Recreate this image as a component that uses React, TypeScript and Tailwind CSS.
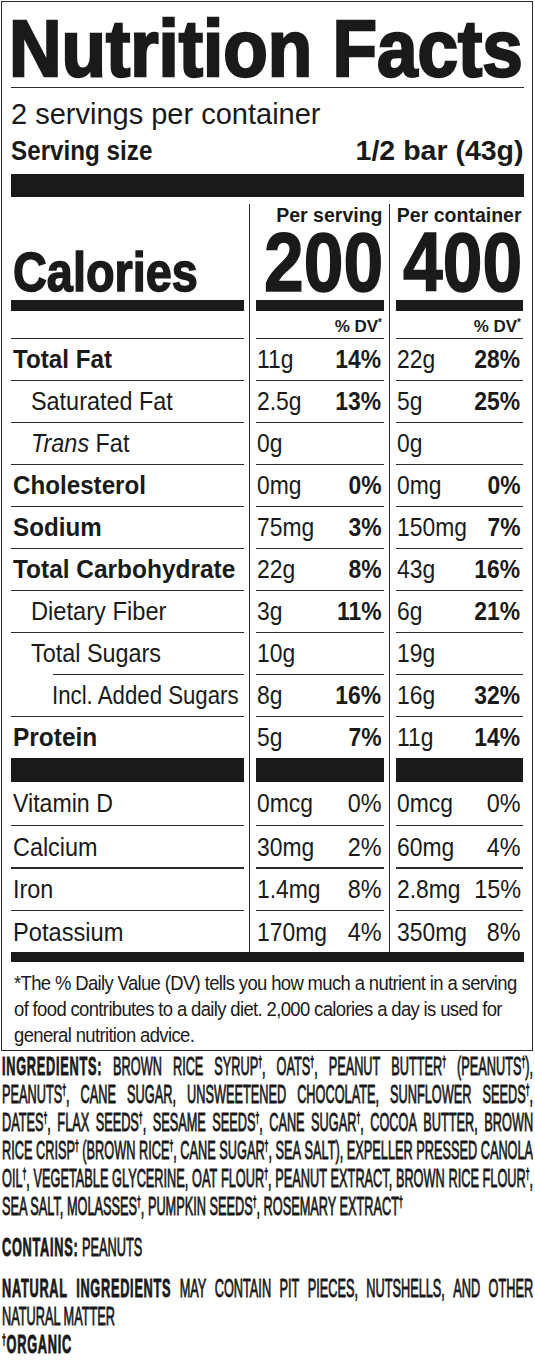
import type { ReactNode } from "react";

type Nutrient = {
  label: ReactNode;
  bold?: boolean;
  pad: string;
  sc: string;
  line?: string;
  s: string[];
  c: string[];
};

const nutrients: Nutrient[] = [
  { label: "Total Fat", bold: true, pad: "pl-[1.5px]", sc: "scale-x-[0.93]", s: ["11g", "14%"], c: ["22g", "28%"] },
  { label: "Saturated Fat", pad: "pl-[19.5px]", sc: "scale-x-[0.9]", s: ["2.5g", "13%"], c: ["5g", "25%"] },
  {
    label: (
      <>
        <i>Trans</i> Fat
      </>
    ),
    pad: "pl-[19.5px]",
    sc: "scale-x-[0.9]",
    s: ["0g"],
    c: ["0g"],
  },
  { label: "Cholesterol", bold: true, pad: "pl-[1.5px]", sc: "scale-x-[0.93]", s: ["0mg", "0%"], c: ["0mg", "0%"] },
  { label: "Sodium", bold: true, pad: "pl-[1.5px]", sc: "scale-x-[0.93]", s: ["75mg", "3%"], c: ["150mg", "7%"] },
  { label: "Total Carbohydrate", bold: true, pad: "pl-[1.5px]", sc: "scale-x-[0.94]", s: ["22g", "8%"], c: ["43g", "16%"] },
  { label: "Dietary Fiber", pad: "pl-[19.5px]", sc: "scale-x-[0.91]", s: ["3g", "11%"], c: ["6g", "21%"] },
  { label: "Total Sugars", pad: "pl-[19.5px]", sc: "scale-x-[0.9]", s: ["10g"], c: ["19g"] },
  {
    label: "Incl. Added Sugars",
    pad: "pl-[40.5px]",
    sc: "scale-x-[0.855]",
    line: "ml-[41.5px]",
    s: ["8g", "16%"],
    c: ["16g", "32%"],
  },
  { label: "Protein", bold: true, pad: "pl-[1.5px]", sc: "scale-x-[0.94]", s: ["5g", "7%"], c: ["11g", "14%"] },
];

const vitamins = [
  { label: "Vitamin D", sc: "scale-x-[0.89]", s: ["0mcg", "0%"], c: ["0mcg", "0%"] },
  { label: "Calcium", sc: "scale-x-[0.9]", s: ["30mg", "2%"], c: ["60mg", "4%"] },
  { label: "Iron", sc: "scale-x-[0.9]", s: ["1.4mg", "8%"], c: ["2.8mg", "15%"] },
  { label: "Potassium", sc: "scale-x-[0.91]", s: ["170mg", "4%"], c: ["350mg", "8%"] },
];

function Dag() {
  return <span className="relative -top-[8px] text-[14px] leading-none">†</span>;
}

function withDag(s: string): ReactNode {
  const parts = s.split("†");
  return parts.map((p, i) => (
    <span key={i}>
      {p}
      {i < parts.length - 1 && <Dag />}
    </span>
  ));
}

function JLine({ words, bold = 0 }: { words: string[]; bold?: number }) {
  return (
    <div className="flex h-[28px] justify-between whitespace-nowrap">
      {words.map((w, i) => (
        <span key={i} className={i < bold ? "font-bold tracking-[1.5px]" : ""}>
          {withDag(w)}
        </span>
      ))}
    </div>
  );
}

function Values({ v, boldPct }: { v: string[]; boldPct: boolean }) {
  return (
    <div className="flex flex-1 items-center justify-between pl-[1px] pr-[2px] text-[26px] leading-[26px]">
      <span className="inline-block origin-left scale-x-[0.88] whitespace-nowrap">{v[0]}</span>
      {v[1] && (
        <span
          className={`inline-block origin-right whitespace-nowrap ${
            boldPct ? "scale-x-[0.88] font-bold" : "scale-x-[0.9]"
          }`}
        >
          {v[1]}
        </span>
      )}
    </div>
  );
}

function Header({ k }: { k: number }) {
  if (k === 0)
    return (
      <div className="flex h-[103.5px] flex-col justify-end pb-[7.9px] pl-[2.3px]">
        <span className="inline-block origin-left scale-x-[0.852] whitespace-nowrap text-[55px] font-bold leading-[41px] [-webkit-text-stroke:1.5px_#1a1a1a]">
          Calories
        </span>
      </div>
    );
  return (
    <div className="flex h-[103.5px] flex-col items-end justify-end pb-[7.4px] pr-[1px]">
      <span className="whitespace-nowrap text-[19.5px] font-bold leading-[19px]">
        {k === 1 ? "Per serving" : "Per container"}
      </span>
      <span className="-mr-[1px] mt-[6.3px] inline-block origin-right scale-x-[0.85] text-[84px] font-bold leading-[62px] [-webkit-text-stroke:1.5px_#1a1a1a]">
        {k === 1 ? "200" : "400"}
      </span>
    </div>
  );
}

function Column({ k }: { k: number }) {
  const width = k === 0 ? "w-[232.5px]" : k === 1 ? "w-[128px]" : "w-[127px]";
  return (
    <div className={`${width} flex flex-col`}>
      <Header k={k} />
      <div className="h-[11px] bg-[#1a1a1a]" />
      <div className="flex h-[26.25px] items-end justify-end pb-[0.7px] pr-[1.5px] text-[17px] font-bold leading-[17px]">
        {k > 0 && (
          <span className="whitespace-nowrap">
            % DV<span className="relative -top-[6px] text-[10px]">*</span>
          </span>
        )}
      </div>
      {nutrients.map((n, i) => (
        <div key={i} className="flex h-[42px] flex-col">
          <div className={`h-[1.5px] bg-[#2b2b2b] ${k === 0 && n.line ? n.line : ""}`} />
          {k === 0 ? (
            <div className={`flex flex-1 items-center text-[26px] leading-[26px] ${n.pad}`}>
              <span
                className={`inline-block origin-left whitespace-nowrap ${n.sc} ${n.bold ? "font-bold" : ""}`}
              >
                {n.label}
              </span>
            </div>
          ) : (
            <Values v={k === 1 ? n.s : n.c} boldPct />
          )}
        </div>
      ))}
      <div className="h-[24.5px] bg-[#1a1a1a]" />
      {vitamins.map((v, i) => (
        <div key={i} className="flex h-[42.5px] flex-col">
          {i > 0 && <div className="h-[1.5px] bg-[#2b2b2b]" />}
          {k === 0 ? (
            <div className="flex flex-1 items-center pl-[1.5px] text-[26px] leading-[26px]">
              <span className={`inline-block origin-left whitespace-nowrap ${v.sc}`}>{v.label}</span>
            </div>
          ) : (
            <Values v={k === 1 ? v.s : v.c} boldPct={false} />
          )}
        </div>
      ))}
    </div>
  );
}

function Divider() {
  return (
    <div className="flex w-[12px] justify-center pt-[7.5px]">
      <div className="w-[1.5px] bg-[#2b2b2b]" />
    </div>
  );
}

export default function App() {
  return (
    <div className="h-[1361px] w-[535px] overflow-hidden bg-white font-['Liberation_Sans',Arial,sans-serif] text-[#1a1a1a]">
      <div className="ml-[1px] mt-[0.5px] w-[531.5px] border-[1.5px] border-[#2b2b2b] pb-[2.7px] pl-[9px] pr-[8px] pt-[17.3px]">
        <div className="h-[60px]">
          <span className="-ml-[2px] inline-block origin-left scale-x-[0.91] whitespace-nowrap text-[80px] font-bold leading-[60px] [-webkit-text-stroke:2.5px_#1a1a1a]">
            Nutrition Facts
          </span>
        </div>
        <div className="mt-[8.2px] h-[1.5px] bg-[#2b2b2b]" />
        <div className="mt-[11.1px] whitespace-nowrap text-[29px] leading-[29px]">2 servings per container</div>
        <div className="mt-[7.4px] flex items-baseline justify-between text-[28.5px] font-bold leading-[28px]">
          <span className="inline-block origin-left scale-x-[0.85] whitespace-nowrap">Serving size</span>
          <span className="whitespace-nowrap">1/2 bar (43g)</span>
        </div>
        <div className="mt-[10.5px] h-[22.5px] bg-[#1a1a1a]" />

        <div className="flex">
          <Column k={0} />
          <Divider />
          <Column k={1} />
          <Divider />
          <Column k={2} />
        </div>
        <div className="h-[10.25px] bg-[#1a1a1a]" />

        <div className="pl-[2.5px] pt-[7.2px] text-[20.5px] leading-[26px] tracking-[-0.7px]">
          <div className="origin-left scale-x-[0.9] whitespace-nowrap">
            <div>*The % Daily Value (DV) tells you how much a nutrient in a serving</div>
            <div>of food contributes to a daily diet. 2,000 calories a day is used for</div>
            <div>general nutrition advice.</div>
          </div>
        </div>
      </div>

      <div className="ml-[2px] mt-[0.6px] w-[531px] overflow-hidden">
        <div className="w-[1084px] origin-left scale-x-[0.49] text-[26px] leading-[28px] [-webkit-text-stroke:0.9px_#1a1a1a]">
          <JLine
            bold={1}
            words={["INGREDIENTS:", "BROWN", "RICE", "SYRUP†,", "OATS†,", "PEANUT", "BUTTER†", "(PEANUTS†),"]}
          />
          <JLine words={["PEANUTS†,", "CANE", "SUGAR,", "UNSWEETENED", "CHOCOLATE,", "SUNFLOWER", "SEEDS†,"]} />
          <JLine
            words={["DATES†,", "FLAX", "SEEDS†,", "SESAME", "SEEDS†,", "CANE", "SUGAR†,", "COCOA", "BUTTER,", "BROWN"]}
          />
          <JLine
            words={["RICE", "CRISP†", "(BROWN", "RICE†,", "CANE", "SUGAR†,", "SEA", "SALT),", "EXPELLER", "PRESSED", "CANOLA"]}
          />
          <JLine
            words={["OIL†,", "VEGETABLE", "GLYCERINE,", "OAT", "FLOUR†,", "PEANUT", "EXTRACT,", "BROWN", "RICE", "FLOUR†,"]}
          />
          <div className="h-[28px] whitespace-nowrap">
            {withDag("SEA SALT, MOLASSES†, PUMPKIN SEEDS†, ROSEMARY EXTRACT†")}
          </div>

          <div className="mt-[13px] h-[28px] whitespace-nowrap">
            <span className="font-bold tracking-[1.5px]">CONTAINS:</span> PEANUTS
          </div>

          <div className="mt-[13px]">
            <JLine
              bold={2}
              words={["NATURAL", "INGREDIENTS", "MAY", "CONTAIN", "PIT", "PIECES,", "NUTSHELLS,", "AND", "OTHER"]}
            />
            <div className="h-[28px] whitespace-nowrap">NATURAL MATTER</div>
          </div>

          <div className="mt-[1px] h-[27px] whitespace-nowrap font-bold leading-[27px] tracking-[1.5px]">
            <Dag />
            ORGANIC
          </div>
        </div>
      </div>
    </div>
  );
}
